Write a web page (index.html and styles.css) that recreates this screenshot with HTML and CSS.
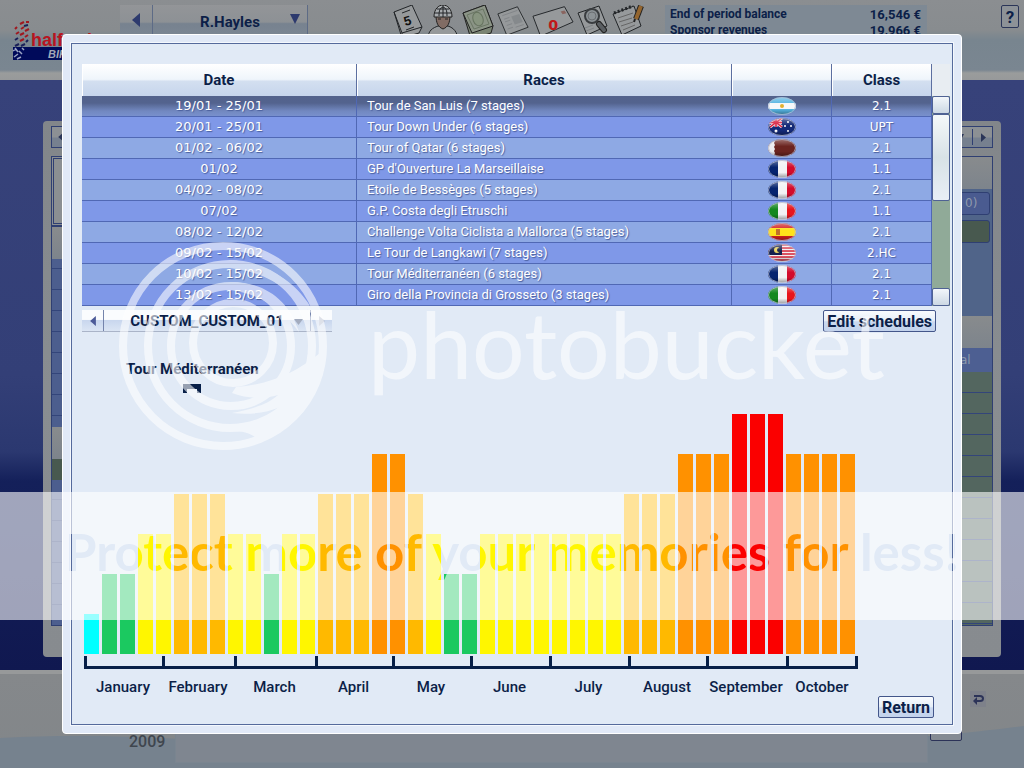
FILE: index.html
```html
<!DOCTYPE html>
<html lang="en">
<head>
<meta charset="utf-8">
<title>Race schedule</title>
<link rel="stylesheet" href="styles.css">
</head>
<body>
<svg class="defs" width="0" height="0" aria-hidden="true">
  <defs>
    <clipPath id="oval"><ellipse cx="14" cy="9" rx="14" ry="9"/></clipPath>
    <linearGradient id="gloss" x1="0" y1="0" x2="0" y2="1"><stop offset="0" stop-color="#fff" stop-opacity=".35"/><stop offset=".4" stop-color="#fff" stop-opacity="0"/><stop offset=".7" stop-color="#000" stop-opacity="0"/><stop offset="1" stop-color="#000" stop-opacity=".35"/></linearGradient>
    <symbol id="shine" viewBox="0 0 28 18"><ellipse cx="14" cy="9" rx="13.5" ry="8.5" fill="url(#gloss)" stroke="#b5bccf" stroke-opacity=".8"/></symbol>
    <symbol id="fr" viewBox="0 0 28 18"><g clip-path="url(#oval)"><path fill="#06246f" d="M0 0h10v18H0z"/><path fill="#f2f2f4" d="M10 0h9v18h-9z"/><path fill="#d30b2c" d="M19 0h9v18h-9z"/></g><use href="#shine"/></symbol>
    <symbol id="it" viewBox="0 0 28 18"><g clip-path="url(#oval)"><path fill="#14881f" d="M0 0h10v18H0z"/><path fill="#f2f2f4" d="M10 0h9v18h-9z"/><path fill="#e8151c" d="M19 0h9v18h-9z"/></g><use href="#shine"/></symbol>
    <symbol id="ar" viewBox="0 0 28 18"><g clip-path="url(#oval)"><path fill="#55b4e2" d="M0 0h28v18H0z"/><path fill="#f6f8fa" d="M0 6h28v6H0z"/><circle cx="14" cy="9" r="2" fill="#e0b030"/></g><use href="#shine"/></symbol>
    <symbol id="au" viewBox="0 0 28 18"><g clip-path="url(#oval)"><path fill="#142a78" d="M0 0h28v18H0z"/><path stroke="#f0d0d8" stroke-width="3" d="M0 4.500h14M8 0v9M2 0l12 9M14 0L2 9"/><path stroke="#d81c3c" stroke-width="1.500" d="M0 4.500h14M8 0v9M2 0l12 9M14 0L2 9"/><g fill="#fff"><circle cx="8" cy="13" r="1.500"/><circle cx="20" cy="4" r="1"/><circle cx="17" cy="8" r="1"/><circle cx="23" cy="8" r="1"/><circle cx="20" cy="13" r="1"/></g></g><use href="#shine"/></symbol>
    <symbol id="qa" viewBox="0 0 28 18"><g clip-path="url(#oval)"><path fill="#6b2420" d="M0 0h28v18H0z"/><path fill="#ececf0" d="M0 0h6l1 2-1 2 1 2-1 2 1 2-1 2 1 2-1 2 1 2H0z"/></g><use href="#shine"/></symbol>
    <symbol id="es" viewBox="0 0 28 18"><g clip-path="url(#oval)"><path fill="#d3201f" d="M0 0h28v18H0z"/><path fill="#ffe21a" d="M0 5h28v8H0z"/><path fill="#c0702a" d="M8 6h4v6H8z"/></g><use href="#shine"/></symbol>
    <symbol id="my" viewBox="0 0 28 18"><g clip-path="url(#oval)"><path fill="#f3eff2" d="M0 0h28v18H0z"/><path stroke="#d42034" stroke-width="1.400" d="M0 1h28M0 4h28M0 7h28M0 10h28M0 13h28M0 16h28"/><path fill="#14204e" d="M0 0h14v11H0z"/><circle cx="9" cy="6" r="3" fill="#e8d060"/><circle cx="11" cy="6" r="2" fill="#14204e"/></g><use href="#shine"/></symbol>
    <symbol id="left" viewBox="0 0 8 14"><path fill="currentColor" d="M8 0v14L0 7z"/></symbol>
    <symbol id="right" viewBox="0 0 8 14"><path fill="currentColor" d="M0 0v14l8-7z"/></symbol>
    <symbol id="down" viewBox="0 0 10 10"><path fill="currentColor" d="M0 0h10L5 10z"/></symbol>
  </defs>
</svg>

<div class="screen">
  <header class="topbar">
    <svg class="logo" viewBox="0 0 90 40" aria-label="halfords bikehut">
      <g stroke-width="2" fill="none"><path stroke="#a01820" d="M4 14l3-2M9 9l3-2M8 15l4-2M13 11l4-2M8 21l4-2M13 17l3-2M8 4l4-2M14 2l3 0M3 9l2-2"/><path stroke="#1a2058" d="M3 20l3-2M3 26l4-2M9 26l4-2M14 22l2-2M12 6l4-1"/></g>
      <path fill="#000a5a" d="M1 27h88v8H1z"/><path fill="#000a5a" d="M1 35h88v5H1z"/>
      <path stroke="#9aa4c4" stroke-width="1.500" d="M1 31l3-2M2 37l4-3M5 39l4-2M7 31l3 3M10 28l2 2M3 28l3 4"/>
      <text class="logo-red" x="19" y="26">halfords</text>
      <text class="logo-white" x="36" y="38">BIKEHUT</text>
    </svg>
    <div class="rider">
      <button type="button" aria-label="Previous rider"><svg width="8" height="14"><use href="#left"/></svg></button>
      <label class="pick"><select aria-label="Rider"><option>R.Hayles</option></select><svg width="10" height="10"><use href="#down"/></svg></label>
    </div>
    <nav class="icons" aria-label="Sections">
      <svg viewBox="0 0 30 32"><path class="pg" d="M1 7L19 0l10 22-3 6-17 5z"/><path class="ln" d="M1 7l8 21 20-6M9 28v5"/><text class="cal" transform="rotate(-16 15 16)" x="11" y="20">5</text><path class="ln" d="M9 8l8-3M13 25l8-3"/></svg>
      <svg viewBox="0 0 32 32"><path class="pg" d="M1 34c0-9 5-11 10-13h10c6 2 9 6 10 13z"/><path fill="#816c64" stroke="#222" d="M9 10h14c0 8-2 12-7 14-5-2-7-6-7-14z"/><path fill="#a7abae" stroke="#222" d="M7 12C7-4 25-4 25 12z"/><path class="ln" d="M12 11c0-6 1-8 4-9M16 0v12M20 11c0-6-1-8-4-9M8 8h16M10 4h12"/><path stroke="#222" d="M11 14h3M18 14h3"/></svg>
      <svg viewBox="0 0 32 32"><path fill="#7a8474" stroke="#222" d="M1 8L23 0l8 21-2 7-20 6z"/><path fill="#8b9486" stroke="#222" d="M1 8L23 0l8 21-21 7z"/><path fill="none" stroke="#6a7664" d="M5 10l16-6 6 15-15 5z"/><ellipse cx="16" cy="14" rx="5" ry="7" fill="#87947f" stroke="#66735f" transform="rotate(-20 16 14)"/></svg>
      <svg viewBox="0 0 36 32"><path class="pg" d="M1 8L23 0l12 23-24 9z"/><path stroke="#7f8386" d="M6 10l17-6M8 14l6-2M9 17l6-2M11 21l6-2M12 25l6-2"/><path fill="#85898c" d="M16 11l9-3 4 9-9 3z"/><path stroke="#7f8386" d="M21 23l9-3"/></svg>
      <svg class="wide" viewBox="0 0 44 32"><path class="pg" d="M1 11L34 1l9 16-34 15z"/><path fill="#8a6560" d="M30 6l4-1 2 3-4 1z"/><text class="zero" x="17" y="25">0</text></svg>
      <svg viewBox="0 0 32 32"><path class="pg" d="M1 8L22 1l8 20-20 9z"/><path stroke="#7f8386" d="M8 23l8-3M9 26l8-3"/><circle cx="15" cy="11" r="7" fill="#8c9296" stroke="#3a3d40" stroke-width="2"/><circle cx="15" cy="11" r="4" fill="none" stroke="#6a6e72"/><path stroke="#222" stroke-width="6" stroke-linecap="round" d="M22 19l5 6"/><path stroke="#5a5e62" stroke-width="4" stroke-linecap="round" d="M22 19l5 6"/></svg>
      <svg viewBox="0 0 32 32"><path class="pg" d="M1 9L22 1l7 20-19 9z"/><path class="ln" stroke-width="3" stroke-dasharray="2 2" d="M2 8l19-7"/><path stroke="#666" d="M6 13l15-5M7 17l13-4M9 21l12-4M11 25l12-5"/><path stroke="#222" stroke-width="6" d="M29 1l-5 13"/><path stroke="#94652e" stroke-width="4" d="M29 1l-5 13"/><path stroke="#222" stroke-width="2" d="M23 14l-1 3"/></svg>
    </nav>
    <table class="money">
      <tr><th>End of period balance</th><td>16,546 €</td></tr>
      <tr><th>Sponsor revenues</th><td>19,966 €</td></tr>
    </table>
    <button type="button" class="help">?</button>
  </header>

  <main class="stage">
    <div class="panel">
      <div class="edge west">
        <div class="tool"><svg width="5" height="8"><use href="#left"/></svg></div>
        <div class="photo"></div>
        <div class="list"><i class="gap"></i><i class="blue"></i><i class="grey"></i><i class="moss"></i><i class="rest"></i></div>
      </div>
      <div class="edge east">
        <div class="tool"><svg width="6" height="6"><use href="#down"/></svg><b></b><svg width="5" height="9"><use href="#right"/></svg></div>
        <div class="sheet">
          <i class="grey"></i>
          <div class="pills"><span>0)</span><span class="moss"></span></div>
          <i class="grey"></i>
          <span class="cell">al</span>
          <i class="rest"></i>
        </div>
      </div>
    </div>
  </main>

  <footer class="base">
    <svg class="wave" viewBox="0 0 1024 98" preserveAspectRatio="none" aria-hidden="true"><path fill="#76828e" d="M0 68C80 64 150 66 260 74S600 82 830 72C930 68 990 60 1024 56V98H0z"/></svg>
    <span class="year">2009</span>
    <div class="note"></div>
    <i class="stub"></i>
    <svg class="back" viewBox="0 0 16 16" aria-hidden="true"><path fill="#7e818a" d="M0 0h16v16H0z"/><path fill="none" stroke="#2c3358" stroke-width="2" d="M4 5h6c4 0 4 5 0 5H6"/><path fill="#2c3358" d="M3 10l4-4v8z"/></svg>
  </footer>

  <section class="dialog" role="dialog" aria-label="Race schedule">
    <div class="frame">
      <div class="grid">
        <table class="races">
          <colgroup><col class="c-date"><col class="c-race"><col class="c-flag"><col class="c-class"></colgroup>
          <thead><tr><th>Date</th><th>Races</th><th></th><th>Class</th></tr></thead>
          <tbody>
            <tr class="on"><td>19/01 - 25/01</td><td>Tour de San Luis (7 stages)</td><td><svg><use href="#ar"/></svg></td><td>2.1</td></tr>
            <tr><td>20/01 - 25/01</td><td>Tour Down Under (6 stages)</td><td><svg><use href="#au"/></svg></td><td>UPT</td></tr>
            <tr><td>01/02 - 06/02</td><td>Tour of Qatar (6 stages)</td><td><svg><use href="#qa"/></svg></td><td>2.1</td></tr>
            <tr><td>01/02</td><td>GP d'Ouverture La Marseillaise</td><td><svg><use href="#fr"/></svg></td><td>1.1</td></tr>
            <tr><td>04/02 - 08/02</td><td>Etoile de Bessèges (5 stages)</td><td><svg><use href="#fr"/></svg></td><td>2.1</td></tr>
            <tr><td>07/02</td><td>G.P. Costa degli Etruschi</td><td><svg><use href="#it"/></svg></td><td>1.1</td></tr>
            <tr><td>08/02 - 12/02</td><td>Challenge Volta Ciclista a Mallorca (5 stages)</td><td><svg><use href="#es"/></svg></td><td>2.1</td></tr>
            <tr><td>09/02 - 15/02</td><td>Le Tour de Langkawi (7 stages)</td><td><svg><use href="#my"/></svg></td><td>2.HC</td></tr>
            <tr><td>10/02 - 15/02</td><td>Tour Méditerranéen (6 stages)</td><td><svg><use href="#fr"/></svg></td><td>2.1</td></tr>
            <tr><td>13/02 - 15/02</td><td>Giro della Provincia di Grosseto (3 stages)</td><td><svg><use href="#it"/></svg></td><td>2.1</td></tr>
          </tbody>
        </table>
        <div class="scroll">
          <button type="button" aria-label="Scroll up"></button>
          <div class="thumb"></div>
          <div class="track"></div>
          <button type="button" aria-label="Scroll down"></button>
        </div>
      </div>

      <div class="controls">
        <div class="schedule">
          <button type="button" aria-label="Previous schedule"><svg width="6" height="10"><use href="#left"/></svg></button>
          <label class="pick"><select aria-label="Schedule"><option>CUSTOM_CUSTOM_01</option></select><svg width="9" height="6" viewBox="0 0 10 10" preserveAspectRatio="none"><path fill="currentColor" d="M0 0h10L5 10z"/></svg></label>
          <button type="button" class="dim" aria-label="Next schedule"><svg width="6" height="10"><use href="#right"/></svg></button>
        </div>
        <button type="button" class="action">Edit schedules</button>
      </div>

      <div class="chart">
        <div class="marker"><span>Tour Méditerranéen</span><i></i></div>
        <div class="bars">
          <i class="cyan"></i><i class="green"></i><i class="green"></i><i class="yellow"></i><i class="yellow"></i><i class="amber"></i><i class="amber"></i><i class="amber"></i><i class="yellow"></i><i class="yellow"></i><i class="green"></i><i class="yellow"></i><i class="yellow"></i><i class="amber"></i><i class="amber"></i><i class="amber"></i><i class="orange"></i><i class="orange"></i><i class="amber"></i><i class="yellow"></i><i class="green"></i><i class="green"></i><i class="yellow"></i><i class="yellow"></i><i class="yellow"></i><i class="yellow"></i><i class="yellow"></i><i class="yellow"></i><i class="yellow"></i><i class="yellow"></i><i class="amber"></i><i class="amber"></i><i class="amber"></i><i class="orange"></i><i class="orange"></i><i class="orange"></i><i class="red"></i><i class="red"></i><i class="red"></i><i class="orange"></i><i class="orange"></i><i class="orange"></i><i class="orange"></i>
        </div>
        <div class="months">
          <span style="flex-grow:78">January</span><span style="flex-grow:72">February</span><span style="flex-grow:81">March</span><span style="flex-grow:77">April</span><span style="flex-grow:78">May</span><span style="flex-grow:79">June</span><span style="flex-grow:79">July</span><span style="flex-grow:78">August</span><span style="flex-grow:80">September</span><span style="flex-grow:72">October</span>
        </div>
      </div>
      <div class="close"><button type="button" class="action">Return</button></div>
    </div>
  </section>

  <div class="watermark">
    <svg class="brand" viewBox="0 0 780 214">
      <g fill="none" stroke="#fff" stroke-width="8">
        <circle cx="105" cy="106" r="100"/>
        <circle cx="112" cy="106" r="82"/>
        <circle cx="113" cy="106" r="60"/>
        <circle cx="115" cy="103" r="40"/>
      </g>
      <path fill="#fff" d="M112 20c42 4 74 26 88 62-22-30-50-50-88-54zM113 42c34 0 58 18 68 50-18-24-40-38-68-42zM118 147c32-2 60-14 84-34-4 40-30 72-62 88-4-8-16-10-26-10 22-4 38-12 48-24-14 6-30 8-48 6 22-4 38-10 46-18-14 4-30 4-46-2z"/>
      <text class="brand-name" x="250" y="139">photobucket</text>
    </svg>
    <svg class="band" width="100%" height="128">
      <mask id="cut"><rect width="100%" height="128" fill="#fff"/><text class="slogan" x="50%" y="79">Protect more of your memories for less!</text></mask>
      <rect width="100%" height="128" fill="#fff" fill-opacity=".6" mask="url(#cut)"/>
    </svg>
  </div>
</div>
</body>
</html>
```

FILE: styles.css
```css
* { box-sizing: border-box; }
body { margin: 0; font-family: Roboto, "Liberation Sans", sans-serif; color: #0c1f48; }
button, select { font: inherit; color: inherit; margin: 0; padding: 0; border: 0; background: none; }
i { display: block; }
svg { display: block; }
.defs { position: absolute; }

.screen { position: relative; display: flex; flex-direction: column; min-height: 100vh; overflow: hidden; }

/* top bar */
.topbar { display: flex; align-items: flex-start; height: 80px; padding: 5px 5px 0 12px; background: linear-gradient(#8b8e91 0, #888c8f 30px, #78858f 40px, #7a8691 70px, #9a9c9c 73px, #97999a 100%); }
.logo { width: 90px; height: 40px; margin-top: 15px; }
.logo-red { font: bold 18px "Liberation Sans", sans-serif; fill: #b81420; }
.logo-white { font: italic bold 11px "Liberation Sans", sans-serif; fill: #a3a8b8; }
.rider { display: flex; width: 188px; height: 34px; margin-left: 18px; border-right: 1px solid #5d6b86; background: linear-gradient(#939598, #8d9195 50%, #77828f 55%, #7c8794); color: #2d3a6e; }
.rider button { display: flex; align-items: center; justify-content: center; width: 33px; height: 30px; border-right: 1px solid #5d6b86; }
.pick { position: relative; flex: 1; display: flex; align-items: center; }
.pick select { width: 100%; appearance: none; text-align-last: center; font-weight: 700; color: #0c1f48; }
.pick svg { position: absolute; right: 7px; top: 9px; }
.rider .pick { height: 34px; font-size: 15px; }
.icons { display: flex; gap: 3px; margin-left: 84px; flex: none; }
.icons svg { width: 32px; height: 32px; }
.icons .wide { width: 42px; }
.pg { fill: #96999b; stroke: #222528; }
.ln { fill: none; stroke: #222528; }
.cal { font: bold 13px "Liberation Sans", sans-serif; fill: #111; }
.zero { font: bold 15px "DejaVu Sans", sans-serif; fill: #c01818; }
.money { width: 262px; margin-left: 21px; border-spacing: 0; background: #7e8994; font-size: 12px; line-height: 14px; font-weight: 700; }
.money th { padding: 2px 4px 0 5px; text-align: left; }
.money td { padding: 2px 6px 0 8px; text-align: right; font-size: 13px; line-height: 13px; }
.help { width: 18px; height: 23px; margin-left: auto; border: 1px solid #2a3558; border-radius: 2px; background: #8d9297; font-size: 17px; font-weight: 700; line-height: 20px; }

/* backdrop panel */
.stage { flex: 1; padding: 41px 23px 13px 43px; background: linear-gradient(#37427a, #333f77 50%, #2b3870 63%, #14205a 68%, #101850); }
.panel { display: flex; justify-content: space-between; height: 100%; min-height: 536px; padding: 5px 8px 31px; border-radius: 4px; background: linear-gradient(#82868a, #898d91 50%, #878b8f); }
.edge { display: flex; flex-direction: column; width: 44px; color: #2a3558; }
.tool { display: flex; align-items: center; justify-content: flex-end; gap: 8px; height: 22px; padding: 0 6px; border: 1px solid #2f3f72; background: linear-gradient(#8c9094 50%, #76808f 55%); }
.tool b { width: 1px; height: 16px; background: #2f3f72; }
.west .tool { justify-content: flex-start; }
.photo { height: 70px; margin-top: 8px; border: 3px double #2f3f72; background: #8b8f92; }
.list, .sheet { display: flex; flex-direction: column; flex: 1; border: 1px solid #2f3f72; background: repeating-linear-gradient(#4c5e8e 0 20px, #33457a 20px 21px); }
.gap, .grey { height: 32px; background: linear-gradient(#888b8d, #7d848c); }
.blue { height: 168px; }
.moss { height: 21px; background: #48594f; }
.sheet { margin-top: 8px; font: 12px "DejaVu Sans", sans-serif; color: #8e99ac; }
.pills { display: flex; flex-direction: column; gap: 5px; height: 127px; padding: 3px 2px; background: #506489; }
.pills span { height: 23px; padding: 3px 0 0 12px; border: 1px solid #2f3f72; border-radius: 3px; background-color: #4a5b90; }
.pills .moss { background: #48594f; }
.cell { height: 24px; padding: 5px 0 0 10px; background: #4d5f92; }
.sheet .rest { flex: 1; background: repeating-linear-gradient(#53665f 0 20px, #33457a 20px 21px); }

/* footer */
.base { position: relative; display: flex; align-items: flex-end; gap: 9px; height: 98px; padding: 0 62px 5px 129px; border-top: 4px solid #97999a; background: linear-gradient(#85888b, #828689); }
.wave { position: absolute; left: 0; bottom: 0; width: 100%; height: 98px; }
.year { position: relative; width: 37px; padding-bottom: 12px; font-size: 16px; font-weight: 500; color: #3f464e; }
.note { position: relative; flex: 1; height: 30px; border: 1px solid #7a8590; background: #7f8690; }
.stub { position: relative; width: 32px; height: 18px; margin: 0 0 22px -7px; border: 1px solid #2c3358; border-radius: 2px; background: #858b94; }
.back { position: absolute; right: 38px; top: 17px; width: 16px; height: 16px; }

/* dialog */
.dialog { position: absolute; top: 34px; left: 62px; right: 62px; padding: 8px; border: 1px solid #fff; border-radius: 4px; background: #e1e9f7; }
.frame { padding: 20px 2px 6px 10px; border: 1px solid #556a9c; outline: 1px solid #f4f8fd; background: #e1eaf6; }

.grid { display: flex; }
.races { flex: 1; table-layout: fixed; border-spacing: 0; }
.c-date { width: 275px; }
.c-flag, .c-class { width: 100px; }
.races th { height: 32px; padding: 0; border-right: 1px solid #5c6fa0; background: linear-gradient(#fff, #eff5fb 48%, #d3dff0 54%, #c6d5ec); font-size: 15px; font-weight: 700; box-shadow: inset 1px 0 #fff; }
.races td { height: 21px; padding: 0; border-right: 1px solid #5068b4; border-bottom: 1px solid #5068b4; background: #8ea9e4; text-align: center; color: #fff; font: 13px/20px "DejaVu Sans", sans-serif; text-shadow: 1px 1px 1px #4a5f9c; }
.races td:nth-child(2) { padding-left: 10px; text-align: left; font: 13px/20px Roboto, sans-serif; }
.races td:nth-child(4) { font-size: 12px; }
.races tr:nth-child(even) td { background: #7f98e8; }
.races .on td { background: linear-gradient(#53628c, #53638e 35%, #7288c0 75%, #7890cc); }
.races td svg { width: 28px; height: 18px; margin: 0 auto; }
.scroll { display: flex; flex-direction: column; width: 18px; padding-top: 32px; background: linear-gradient(#e8edf2 32px, #90aa98 32px); }
.scroll button, .thumb { height: 18px; border: 1px solid #4f6294; border-radius: 2px; background: linear-gradient(#f2f6fa, #ccd8e4); }
.thumb { height: 87px; background: linear-gradient(#f4f8fa, #d8e2e6 50%, #e8eef6); }
.track { flex: 1; }

.controls { display: flex; justify-content: space-between; padding: 4px 14px 0 0; }
.schedule { display: flex; width: 250px; height: 22px; border-bottom: 1px solid #aab4c8; background: linear-gradient(#fafcfe 45%, #c9d7ee 50%, #dbe5f4); color: #4c5a98; }
.schedule button { display: flex; align-items: center; justify-content: center; width: 22px; border-right: 1px solid #7484ac; }
.schedule .dim { border-right: 0; border-left: 1px solid #7484ac; color: #b0b8cc; }
.schedule .pick { font-size: 15px; color: #a3acbf; }
.action { height: 22px; padding: 0 3px; border: 1px solid #43568a; border-radius: 2px; background: linear-gradient(#f8fbfe, #e6eef8 48%, #cbd9f0 54%, #c2d2ec); font-size: 16px; line-height: 19px; font-weight: 700; }

/* season chart */
.chart { padding: 27px 92px 0 2px; }
.marker { display: inline-flex; flex-direction: column; align-items: center; gap: 6px; margin-left: 42px; font-size: 15px; line-height: 18px; font-weight: 700; }
.marker i { width: 18px; height: 9px; border: solid #071f48; border-width: 5px 4px 0; }
.bars { display: flex; align-items: flex-end; gap: 3px; height: 240px; margin: 21px 3px 2px 0; }
.bars i { flex: 1; }
.cyan { height: 40px; background: #00ffff; }
.green { height: 80px; background: #1bc960; }
.yellow { height: 120px; background: #fff600; }
.amber { height: 160px; background: #ffb900; }
.orange { height: 200px; background: #ff9100; }
.red { height: 240px; background: #fb0000; }
.months { display: flex; background: linear-gradient(#071f48, #071f48) 0 10px / 100% 3px no-repeat; }
.months span { flex: 1 1 0; padding-top: 22px; background: linear-gradient(#071f48, #071f48) 0 0 / 3px 13px no-repeat; text-align: center; font-size: 15px; line-height: 18px; font-weight: 500; }
.months span:last-child { background: linear-gradient(#071f48, #071f48) 0 0 / 3px 13px no-repeat, linear-gradient(#071f48, #071f48) 100% 0 / 3px 13px no-repeat; }
.close { display: flex; justify-content: flex-end; padding: 0 16px 0 0; }

/* watermark */
.watermark { position: absolute; inset: 0; pointer-events: none; }
.brand { position: absolute; left: 118px; top: 240px; width: 780px; height: 214px; opacity: .58; }
.brand-name { font: 93px Lato, sans-serif; fill: #fff; }
.band { position: absolute; left: 0; top: 492px; }
.slogan { font: bold 51px Lato, sans-serif; text-anchor: middle; fill: #000; }
```
